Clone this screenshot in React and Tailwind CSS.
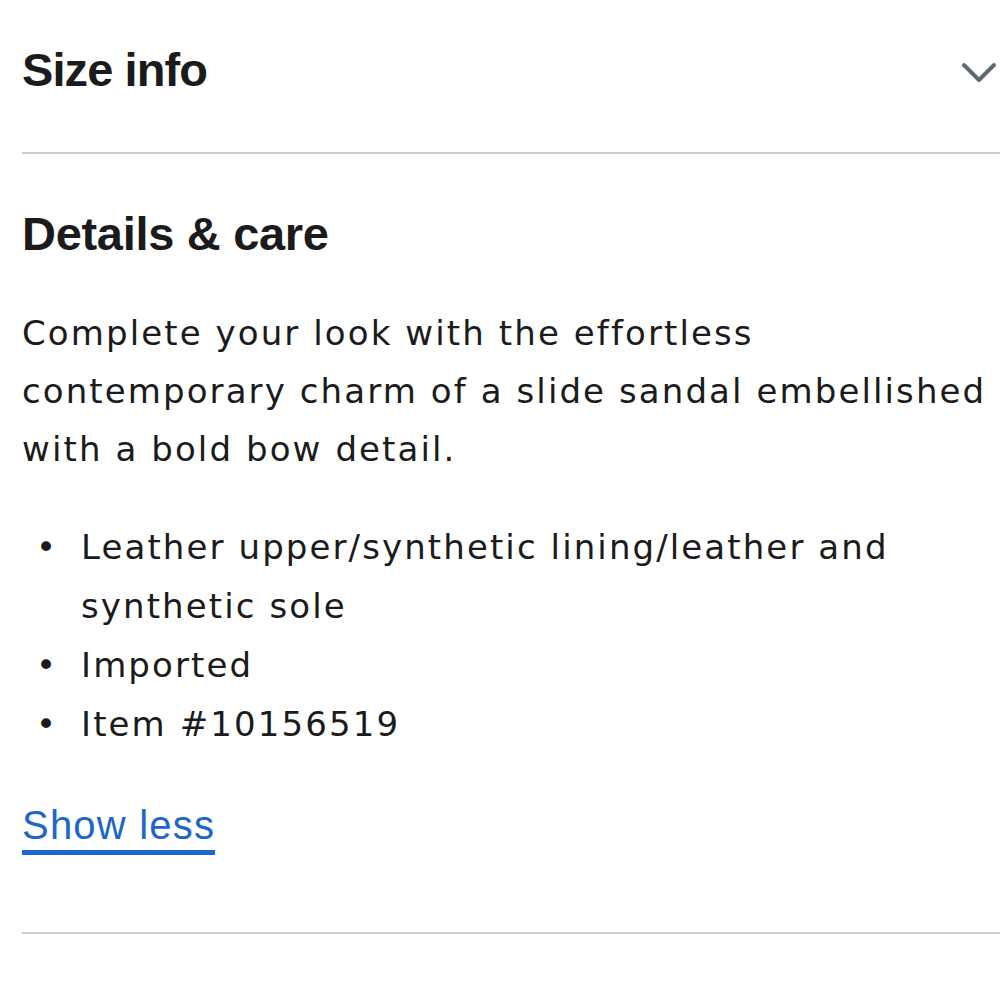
import React from 'react';

const bullets = [
  ['Leather upper/synthetic lining/leather and', 'synthetic sole'],
  ['Imported'],
  ['Item #10156519'],
];

const ChevronDown = () => (
  <svg className="w-[36px] h-[22px]" viewBox="0 0 36 22" fill="none" stroke="#5f6a70" strokeWidth={4} strokeLinecap="round" strokeLinejoin="round">
    <path d="M3 4l15 15L33 4" />
  </svg>
);

export default function App() {
  const body = { fontFamily: '"DejaVu Sans", sans-serif' };
  return (
    <div className="min-h-[1000px] bg-white pl-[22px] text-[#1b1b1b] overflow-hidden" style={{ fontFamily: '"Liberation Sans", Arial, sans-serif' }}>
      {/* Size info */}
      <div className="flex items-center justify-between h-[154px] border-b-2 border-[#c9ced1] pr-[3px]">
        <h2 className="text-[47px] font-bold tracking-[-0.9px] leading-none -mt-[14px]">Size info</h2>
        <div className="-mt-[8px]">
          <ChevronDown />
        </div>
      </div>

      {/* Details & care */}
      <div className="border-b-2 border-[#c9ced1] pb-[77px]">
        <h2 className="pt-[56px] text-[47px] font-bold tracking-[-0.3px] leading-none">Details &amp; care</h2>
        <p className="mt-[47px] text-[34px] leading-[58px] tracking-[2.1px] whitespace-nowrap" style={body}>
          Complete your look with the effortless
          <br />
          contemporary charm of a slide sandal embellished
          <br />
          with a bold bow detail.
        </p>
        <ul className="mt-[40px] text-[34px] leading-[59px] tracking-[2.1px]" style={body}>
          {bullets.map((lines) => (
            <li key={lines[0]} className="flex">
              <span className="w-[59px] shrink-0 pl-[14px]">•</span>
              <span className="whitespace-nowrap">
                {lines.map((l, i) => (
                  <React.Fragment key={l}>
                    {i > 0 && <br />}
                    {l}
                  </React.Fragment>
                ))}
              </span>
            </li>
          ))}
        </ul>
        <a href="#" className="inline-block mt-[51px] text-[#2066c8] text-[40px] tracking-[1.2px] leading-none border-b-[5px] border-[#2066c8] pb-[5px]">
          Show less
        </a>
      </div>
    </div>
  );
}
